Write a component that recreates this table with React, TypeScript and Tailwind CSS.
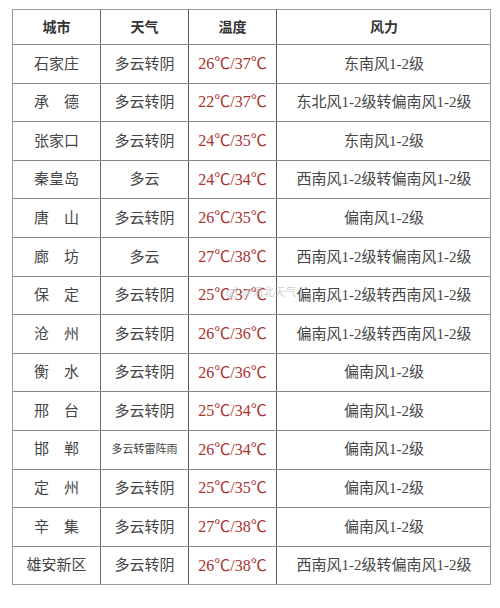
const rows: { city: string; weather: string; temp: string; wind: string; small?: boolean }[] = [
  { city: '石家庄', weather: '多云转阴', temp: '26℃/37℃', wind: '东南风1-2级' },
  { city: '承　德', weather: '多云转阴', temp: '22℃/37℃', wind: '东北风1-2级转偏南风1-2级' },
  { city: '张家口', weather: '多云转阴', temp: '24℃/35℃', wind: '东南风1-2级' },
  { city: '秦皇岛', weather: '多云', temp: '24℃/34℃', wind: '西南风1-2级转偏南风1-2级' },
  { city: '唐　山', weather: '多云转阴', temp: '26℃/35℃', wind: '偏南风1-2级' },
  { city: '廊　坊', weather: '多云', temp: '27℃/38℃', wind: '西南风1-2级转偏南风1-2级' },
  { city: '保　定', weather: '多云转阴', temp: '25℃/37℃', wind: '偏南风1-2级转西南风1-2级' },
  { city: '沧　州', weather: '多云转阴', temp: '26℃/36℃', wind: '偏南风1-2级转西南风1-2级' },
  { city: '衡　水', weather: '多云转阴', temp: '26℃/36℃', wind: '偏南风1-2级' },
  { city: '邢　台', weather: '多云转阴', temp: '25℃/34℃', wind: '偏南风1-2级' },
  { city: '邯　郸', weather: '多云转雷阵雨', temp: '26℃/34℃', wind: '偏南风1-2级', small: true },
  { city: '定　州', weather: '多云转阴', temp: '25℃/35℃', wind: '偏南风1-2级' },
  { city: '辛　集', weather: '多云转阴', temp: '27℃/38℃', wind: '偏南风1-2级' },
  { city: '雄安新区', weather: '多云转阴', temp: '26℃/38℃', wind: '西南风1-2级转偏南风1-2级' },
];

const cols = 'grid grid-cols-[87px_88px_88px_215px]';

export default function App() {
  return (
    <div
      className="w-[500px] h-[608px] bg-white pt-[9px] pl-[12px] relative"
      style={{ fontFamily: '"Liberation Serif", "Noto Sans CJK SC", serif' }}
    >
      <div className="w-[479px] border border-[#9a9a9a] text-[#454545]">
        <div className={`${cols} h-[34px] text-[14px] font-semibold text-[#333]`}>
          <div className="flex items-center justify-center">城市</div>
          <div className="flex items-center justify-center border-l border-[#6a6a6a]">天气</div>
          <div className="flex items-center justify-center border-l border-[#555]">温度</div>
          <div className="flex items-center justify-center border-l border-[#555]">风力</div>
        </div>
        {rows.map((r) => (
          <div key={r.city} className={`${cols} h-[38.6px] border-t border-[#8a8a8a] text-[15px]`}>
            <div className="flex items-center justify-center">{r.city}</div>
            <div
              className={`flex items-center justify-center border-l border-[#6a6a6a] ${
                r.small ? 'text-[11px]' : ''
              }`}
            >
              {r.weather}
            </div>
            <div className="flex items-center justify-center border-l border-[#555] text-[16px] text-[#a8322f]">
              {r.temp}
            </div>
            <div className="flex items-center justify-center border-l border-[#555]">{r.wind}</div>
          </div>
        ))}
      </div>
      {/* watermark */}
      <div className="absolute left-[226px] top-[284px] flex items-center gap-[2px] text-[11px] text-[#c8c8c8] opacity-80 pointer-events-none">
        <svg width="14" height="12" viewBox="0 0 14 12" fill="none" stroke="#c8c8c8" strokeWidth="1.2">
          <ellipse cx="6" cy="7.5" rx="5" ry="3.5" />
          <circle cx="5.5" cy="7.8" r="1.3" />
          <path d="M9.5 1.5a3 3 0 0 1 3 3" />
        </svg>
        <span>@河北天气</span>
      </div>
    </div>
  );
}
